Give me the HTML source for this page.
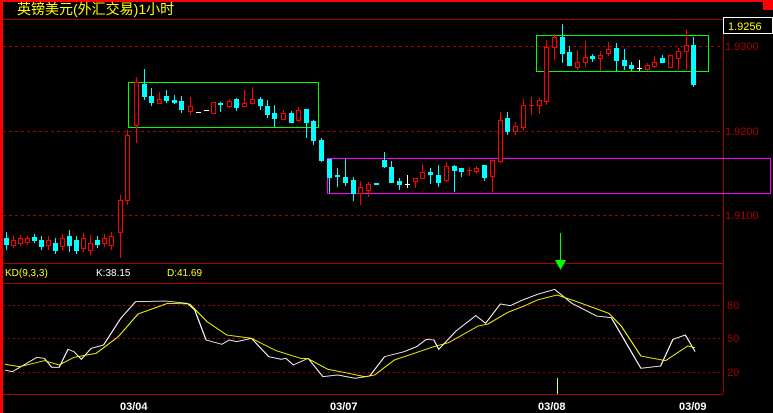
<!DOCTYPE html>
<html><head><meta charset="utf-8"><style>
html,body{margin:0;padding:0;background:#000;width:773px;height:413px;overflow:hidden}
svg{display:block}
text{font-family:"Liberation Sans","Noto Sans CJK SC",sans-serif}
</style></head><body>
<svg width="773" height="413" viewBox="0 0 773 413" xmlns="http://www.w3.org/2000/svg" shape-rendering="crispEdges">
<rect x="0" y="0" width="773" height="413" fill="#000"/>
<rect x="0" y="0" width="773" height="2" fill="#f00"/>
<rect x="0" y="0" width="3" height="413" fill="#f00"/>
<rect x="763" y="0" width="10" height="10" fill="#f00"/>
<text x="17" y="14" fill="#ff0" font-size="14">英镑美元(外汇交易)1小时</text>
<g stroke="#a00" stroke-width="1" fill="none">
<line x1="3" y1="19.5" x2="723" y2="19.5"/>
<line x1="723.5" y1="19" x2="723.5" y2="394"/>
<line x1="3" y1="46.5" x2="723" y2="46.5" stroke-dasharray="3,3"/>
<line x1="3" y1="131.5" x2="723" y2="131.5" stroke-dasharray="3,3"/>
<line x1="3" y1="215.5" x2="723" y2="215.5" stroke-dasharray="3,3"/>
<line x1="3" y1="263.5" x2="723" y2="263.5"/>
<line x1="3" y1="283.5" x2="723" y2="283.5"/>
<line x1="3" y1="305.5" x2="723" y2="305.5" stroke-dasharray="2,3"/>
<line x1="3" y1="338.5" x2="723" y2="338.5" stroke-dasharray="2,3"/>
<line x1="3" y1="372.5" x2="723" y2="372.5" stroke-dasharray="2,3"/>
<line x1="3" y1="394.5" x2="723" y2="394.5"/>
</g>
<rect x="723.5" y="17.5" width="49" height="16" fill="#000" stroke="#fff"/>
<text x="728" y="30" fill="#ff0" font-size="11">1.9256</text>
<g fill="#a00" font-size="11">
<text x="725" y="50">1.9300</text><text x="725" y="135">1.9200</text><text x="725" y="219">1.9100</text>
<text x="727" y="309">80</text><text x="727" y="342">50</text><text x="727" y="376">20</text>
</g>
<rect x="128.5" y="82.5" width="190" height="45" fill="none" stroke="#0f0"/>
<rect x="327.5" y="158.5" width="443" height="35" fill="none" stroke="#f0f"/>
<rect x="536.5" y="35.5" width="172" height="36" fill="none" stroke="#0f0"/>
<g stroke="#f00" fill="#000" stroke-width="1">
<line x1="13.5" y1="236" x2="13.5" y2="248"/><rect x="11.5" y="240.5" width="4" height="5"/>
<line x1="20.5" y1="235" x2="20.5" y2="246"/><rect x="18.5" y="238.5" width="4" height="5"/>
<line x1="27.5" y1="236" x2="27.5" y2="245"/><rect x="25.5" y="238.5" width="4" height="4"/>
<line x1="48.5" y1="236" x2="48.5" y2="250"/><rect x="46.5" y="240.5" width="4" height="5"/>
<line x1="62.5" y1="234" x2="62.5" y2="250"/><rect x="60.5" y="238.5" width="4" height="8"/>
<line x1="83.5" y1="233" x2="83.5" y2="252"/><rect x="81.5" y="238.5" width="4" height="10"/>
<line x1="90.5" y1="235" x2="90.5" y2="255"/><rect x="88.5" y="243.5" width="4" height="7"/>
<line x1="104.5" y1="234" x2="104.5" y2="247"/><rect x="102.5" y="238.5" width="4" height="5"/>
<line x1="111.5" y1="232" x2="111.5" y2="250"/><rect x="109.5" y="236.5" width="4" height="9"/>
<line x1="120.5" y1="195" x2="120.5" y2="258"/><rect x="118.5" y="200.5" width="4" height="32"/>
<line x1="127.5" y1="130" x2="127.5" y2="205"/><rect x="125.5" y="135.5" width="4" height="65"/>
<line x1="136.5" y1="77" x2="136.5" y2="143"/><rect x="134.5" y="82.5" width="4" height="43"/>
<line x1="159.5" y1="92" x2="159.5" y2="104"/><rect x="157.5" y="99.5" width="4" height="4"/>
<line x1="190.5" y1="97" x2="190.5" y2="115"/><rect x="188.5" y="106.5" width="4" height="5"/>
<rect x="211.5" y="102.5" width="4" height="11"/>
<line x1="229.5" y1="99" x2="229.5" y2="108"/><rect x="227.5" y="101.5" width="4" height="5"/>
<line x1="244.5" y1="90" x2="244.5" y2="107"/><rect x="242.5" y="103.5" width="4" height="3"/>
<line x1="252.5" y1="87" x2="252.5" y2="105"/><rect x="250.5" y="99.5" width="4" height="4"/>
<line x1="283.5" y1="110" x2="283.5" y2="120"/><rect x="281.5" y="113.5" width="4" height="6"/>
<line x1="298.5" y1="107" x2="298.5" y2="122"/><rect x="296.5" y="110.5" width="4" height="10"/>
<line x1="360.5" y1="181" x2="360.5" y2="205"/><rect x="358.5" y="187.5" width="4" height="6"/>
<line x1="368.5" y1="182" x2="368.5" y2="197"/><rect x="366.5" y="184.5" width="4" height="6"/>
<line x1="415.5" y1="178" x2="415.5" y2="188"/><rect x="413.5" y="178.5" width="4" height="3"/>
<line x1="422.5" y1="164" x2="422.5" y2="179"/><rect x="420.5" y="172.5" width="4" height="6"/>
<line x1="446.5" y1="162" x2="446.5" y2="182"/><rect x="444.5" y="166.5" width="4" height="14"/>
<line x1="469.5" y1="167" x2="469.5" y2="176"/><line x1="467" y1="170.5" x2="472" y2="170.5"/>
<line x1="476.5" y1="166" x2="476.5" y2="174"/><rect x="474.5" y="168.5" width="4" height="3"/>
<line x1="492.5" y1="160" x2="492.5" y2="192"/><rect x="490.5" y="160.5" width="4" height="16"/>
<line x1="500.5" y1="112" x2="500.5" y2="163"/><rect x="498.5" y="120.5" width="4" height="41"/>
<line x1="515.5" y1="122" x2="515.5" y2="135"/><rect x="513.5" y="126.5" width="4" height="5"/>
<line x1="523.5" y1="99" x2="523.5" y2="131"/><rect x="521.5" y="105.5" width="4" height="22"/>
<line x1="531.5" y1="97" x2="531.5" y2="115"/><line x1="529" y1="105.5" x2="534" y2="105.5"/>
<line x1="539.5" y1="98" x2="539.5" y2="114"/><rect x="537.5" y="100.5" width="4" height="5"/>
<line x1="546.5" y1="40" x2="546.5" y2="105"/><rect x="544.5" y="47.5" width="4" height="54"/>
<line x1="554.5" y1="34" x2="554.5" y2="60"/><rect x="552.5" y="37.5" width="4" height="10"/>
<line x1="577.5" y1="50" x2="577.5" y2="70"/><rect x="575.5" y="62.5" width="4" height="5"/>
<line x1="585.5" y1="41" x2="585.5" y2="67"/><rect x="583.5" y="57.5" width="4" height="5"/>
<line x1="600.5" y1="51" x2="600.5" y2="71"/><rect x="598.5" y="55.5" width="4" height="3"/>
<line x1="608.5" y1="42" x2="608.5" y2="56"/><rect x="606.5" y="49.5" width="4" height="4"/>
<line x1="647.5" y1="63" x2="647.5" y2="71"/><rect x="645.5" y="65.5" width="4" height="4"/>
<line x1="654.5" y1="56" x2="654.5" y2="68"/><rect x="652.5" y="62.5" width="4" height="4"/>
<rect x="668.5" y="55.5" width="4" height="12"/>
<line x1="678.5" y1="48" x2="678.5" y2="70"/><rect x="676.5" y="51.5" width="4" height="7"/>
<line x1="686.5" y1="30" x2="686.5" y2="70"/><rect x="684.5" y="45.5" width="4" height="6"/>
</g>
<g stroke="#0ff" fill="#0ff" stroke-width="1">
<line x1="6.5" y1="232" x2="6.5" y2="250"/><rect x="4.5" y="238.5" width="4" height="6"/>
<line x1="34.5" y1="234" x2="34.5" y2="243"/><rect x="32.5" y="237.5" width="4" height="3"/>
<line x1="41.5" y1="236" x2="41.5" y2="250"/><rect x="39.5" y="240.5" width="4" height="6"/>
<line x1="55.5" y1="238" x2="55.5" y2="254"/><rect x="53.5" y="243.5" width="4" height="7"/>
<line x1="69.5" y1="230" x2="69.5" y2="252"/><rect x="67.5" y="236.5" width="4" height="9"/>
<line x1="76.5" y1="236" x2="76.5" y2="254"/><rect x="74.5" y="240.5" width="4" height="10"/>
<line x1="97.5" y1="236" x2="97.5" y2="248"/><rect x="95.5" y="240.5" width="4" height="4"/>
<line x1="144.5" y1="69" x2="144.5" y2="100"/><rect x="142.5" y="84.5" width="4" height="12"/>
<line x1="151.5" y1="88" x2="151.5" y2="106"/><rect x="149.5" y="96.5" width="4" height="6"/>
<line x1="166.5" y1="90" x2="166.5" y2="103"/><rect x="164.5" y="96.5" width="4" height="4"/>
<line x1="174.5" y1="95" x2="174.5" y2="104"/><rect x="172.5" y="100.5" width="4" height="2"/>
<line x1="181.5" y1="96" x2="181.5" y2="113"/><rect x="179.5" y="101.5" width="4" height="8"/>
<line x1="220.5" y1="102" x2="220.5" y2="112"/><rect x="218.5" y="103.5" width="4" height="1"/>
<line x1="236.5" y1="98" x2="236.5" y2="111"/><rect x="234.5" y="99.5" width="4" height="8"/>
<line x1="260.5" y1="97" x2="260.5" y2="110"/><rect x="258.5" y="99.5" width="4" height="6"/>
<line x1="267.5" y1="100" x2="267.5" y2="118"/><rect x="265.5" y="106.5" width="4" height="8"/>
<line x1="274.5" y1="105" x2="274.5" y2="127"/><rect x="272.5" y="113.5" width="4" height="5"/>
<line x1="291.5" y1="111" x2="291.5" y2="123"/><rect x="289.5" y="113.5" width="4" height="9"/>
<line x1="306.5" y1="109" x2="306.5" y2="138"/><rect x="304.5" y="109.5" width="4" height="13"/>
<line x1="313.5" y1="120" x2="313.5" y2="145"/><rect x="311.5" y="121.5" width="4" height="19"/>
<line x1="321.5" y1="138" x2="321.5" y2="162"/><rect x="319.5" y="140.5" width="4" height="20"/>
<line x1="329.5" y1="159" x2="329.5" y2="193"/><rect x="327.5" y="159.5" width="4" height="18"/>
<line x1="337.5" y1="168" x2="337.5" y2="187"/><rect x="335.5" y="175.5" width="4" height="1"/>
<line x1="345.5" y1="159" x2="345.5" y2="186"/><rect x="343.5" y="177.5" width="4" height="5"/>
<line x1="353.5" y1="177" x2="353.5" y2="201"/><rect x="351.5" y="180.5" width="4" height="13"/>
<rect x="374.5" y="183.5" width="4" height="1"/>
<line x1="384.5" y1="152" x2="384.5" y2="168"/><rect x="382.5" y="160.5" width="4" height="6"/>
<line x1="391.5" y1="161" x2="391.5" y2="183"/><rect x="389.5" y="167.5" width="4" height="15"/>
<line x1="399.5" y1="178" x2="399.5" y2="190"/><rect x="397.5" y="181.5" width="4" height="3"/>
<line x1="430.5" y1="168" x2="430.5" y2="184"/><rect x="428.5" y="172.5" width="4" height="2"/>
<line x1="438.5" y1="165" x2="438.5" y2="187"/><rect x="436.5" y="175.5" width="4" height="7"/>
<line x1="454.5" y1="165" x2="454.5" y2="192"/><rect x="452.5" y="166.5" width="4" height="4"/>
<line x1="461.5" y1="168" x2="461.5" y2="177"/><rect x="459.5" y="168.5" width="4" height="3"/>
<line x1="484.5" y1="165" x2="484.5" y2="181"/><rect x="482.5" y="165.5" width="4" height="12"/>
<line x1="507.5" y1="112" x2="507.5" y2="135"/><rect x="505.5" y="118.5" width="4" height="13"/>
<line x1="562.5" y1="24" x2="562.5" y2="63"/><rect x="560.5" y="37.5" width="4" height="16"/>
<line x1="569.5" y1="46" x2="569.5" y2="66"/><rect x="567.5" y="52.5" width="4" height="13"/>
<line x1="592.5" y1="54" x2="592.5" y2="62"/><rect x="590.5" y="56.5" width="4" height="2"/>
<line x1="616.5" y1="43" x2="616.5" y2="71"/><rect x="614.5" y="48.5" width="4" height="12"/>
<line x1="624.5" y1="49" x2="624.5" y2="70"/><rect x="622.5" y="60.5" width="4" height="5"/>
<line x1="631.5" y1="62" x2="631.5" y2="71"/><rect x="629.5" y="65.5" width="4" height="3"/>
<line x1="662.5" y1="55" x2="662.5" y2="62"/><rect x="660.5" y="58.5" width="4" height="4"/>
<line x1="693.5" y1="37" x2="693.5" y2="87"/><rect x="691.5" y="45.5" width="4" height="39"/>
</g>
<g stroke="#fff" stroke-width="1">
<line x1="196" y1="112.5" x2="201" y2="112.5"/><line x1="204" y1="110.5" x2="209" y2="110.5"/>
<line x1="407.5" y1="175" x2="407.5" y2="188"/><line x1="405" y1="184.5" x2="410" y2="184.5"/>
<line x1="639.5" y1="60" x2="639.5" y2="71"/><line x1="637" y1="68.5" x2="642" y2="68.5"/>
</g>
<line x1="560.5" y1="233" x2="560.5" y2="262" stroke="#0f0" stroke-width="1"/>
<polygon points="555,260 566,260 560.5,270" fill="#0f0"/>
<line x1="557.5" y1="378" x2="557.5" y2="394" stroke="#ff0"/>
<text x="5" y="276" fill="#ff0" font-size="10">KD(9,3,3)</text>
<text x="96" y="276" fill="#fff" font-size="10">K:38.15</text>
<text x="167" y="276" fill="#ff0" font-size="10">D:41.69</text>
<g transform="translate(0,250) scale(0.493,0.3333)" fill="none" shape-rendering="auto">
<polyline stroke="#fff" stroke-width="2.5" points="10,360 25,365 75,322 90,325 105,352 120,352 138,298 150,305 165,328 185,295 210,285 245,205 275,155 335,153 380,160 395,180 418,270 450,283 465,270 480,275 510,265 545,320 570,328 580,325 595,345 625,325 655,380 685,375 720,385 750,378 780,320 820,305 845,290 865,268 880,270 890,298 925,243 965,197 985,220 1015,162 1035,167 1060,150 1090,133 1125,118 1160,160 1210,198 1240,203 1300,355 1340,348 1365,268 1390,255 1410,305"/>
<polyline stroke="#ff0" stroke-width="2.5" points="10,343 40,350 90,332 120,345 150,322 195,310 240,260 280,192 340,160 385,162 420,215 460,255 510,265 560,302 610,325 625,326 665,358 700,368 740,380 760,375 800,330 840,310 880,290 910,278 970,228 990,222 1030,187 1060,170 1090,150 1130,135 1170,155 1235,190 1260,228 1300,318 1350,332 1395,288 1410,293"/>
</g>
<g fill="#fff" font-size="11" font-weight="bold" font-family="Liberation Mono, monospace">
<text x="120" y="410">03/04</text><text x="330" y="410">03/07</text><text x="538" y="410">03/08</text><text x="679" y="410">03/09</text>
</g>
</svg>
</body></html>
